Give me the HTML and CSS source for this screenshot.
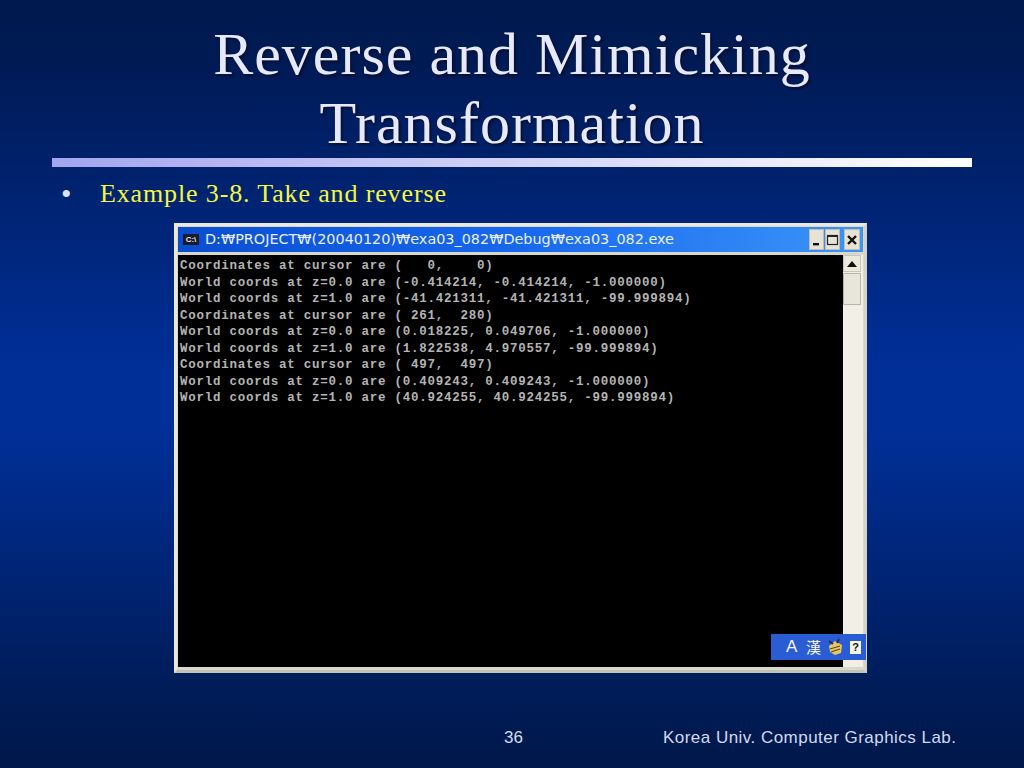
FILE: index.html
```html
<!DOCTYPE html>
<html lang="en">
<head>
<meta charset="utf-8">
<title>Reverse and Mimicking Transformation</title>
<link rel="stylesheet" href="styles.css">
</head>
<body>
<main class="slide">
  <h1 class="title">Reverse and Mimicking<br>Transformation</h1>
  <div class="rule"></div>
  <ul class="bullets"><li><span class="dot">•</span><span>Example 3-8. Take and reverse</span></li></ul>
  <section class="window">
    <header class="titlebar">
      <span class="appicon">C:\</span>
      <span class="wintitle">D:₩PROJECT₩(20040120)₩exa03_082₩Debug₩exa03_082.exe</span>
      <span class="controls">
        <span class="btn"><svg width="13" height="14" viewBox="0 0 13 14"><rect x="3" y="10" width="6" height="2.4" fill="#111"/></svg></span>
        <span class="btn"><svg width="13" height="14" viewBox="0 0 13 14"><rect x="1.5" y="2.5" width="10" height="9" fill="none" stroke="#222" stroke-width="1.2"/><rect x="1.5" y="2" width="10" height="2" fill="#222"/></svg></span>
        <span class="btn btn-close"><svg width="14" height="14" viewBox="0 0 14 14"><path d="M3 3l8 8M11 3l-8 8" stroke="#111" stroke-width="2.4"/></svg></span>
      </span>
    </header>
    <div class="client">
      <pre class="console">Coordinates at cursor are (   0,    0)
World coords at z=0.0 are (-0.414214, -0.414214, -1.000000)
World coords at z=1.0 are (-41.421311, -41.421311, -99.999894)
Coordinates at cursor are ( 261,  280)
World coords at z=0.0 are (0.018225, 0.049706, -1.000000)
World coords at z=1.0 are (1.822538, 4.970557, -99.999894)
Coordinates at cursor are ( 497,  497)
World coords at z=0.0 are (0.409243, 0.409243, -1.000000)
World coords at z=1.0 are (40.924255, 40.924255, -99.999894)</pre>
      <div class="scrollbar">
        <span class="arrow"><svg width="10" height="6" viewBox="0 0 10 6"><path d="M5 0l5 6H0z" fill="#111"/></svg></span>
        <span class="thumb"></span>
      </div>
    </div>
    <div class="ime">
      <span class="ime-a">A</span><span class="ime-han">漢</span>
      <svg class="ime-pad" width="18" height="18" viewBox="0 0 18 18"><path d="M3 8l6-5 7 4-1 8-6 2-5-3z" fill="#e8c860"/><path d="M4 11l10-3M5 14l9-3" stroke="#5a4a20" stroke-width="1.3"/><path d="M3 3l4 3M13 1l-2 4" stroke="#302860" stroke-width="2"/></svg>
      <span class="ime-help">?</span>
    </div>
  </section>
  <footer class="footer"><span class="page">36</span><span class="lab">Korea Univ. Computer Graphics Lab.</span></footer>
</main>
</body>
</html>
```
FILE: styles.css
```css
html, body { margin: 0; padding: 0; }
body { width: 1024px; height: 768px; overflow: hidden; }
.slide {
  width: 1024px; height: 768px; box-sizing: border-box;
  display: flex; flex-direction: column;
  background: linear-gradient(180deg, #001a4e 0%, #001a54 8%, #002f98 48%, #002f98 56%, #001c58 90%, #00184a 100%);
  font-family: "Liberation Serif", serif;
}
.title {
  margin: 20px 0 0; height: 138px;
  font-size: 60px; line-height: 69px; font-weight: 400;
  letter-spacing: 1px;
  color: #e6e9ff; text-align: center;
  text-shadow: 2px 2px 2px #0a1030;
}
.rule {
  margin: 0 52px; height: 9px;
  background: linear-gradient(90deg, #a4a4f0 0%, #ffffff 100%);
}
.bullets { list-style: none; margin: 12px 0 0; padding: 0 0 0 61px; height: 44px; }
.bullets li { display: flex; font-size: 26px; line-height: 30px; letter-spacing: 0.86px; color: #f6f640; }
.dot { width: 39px; color: #dde0ff; font-size: 30px; }
.window {
  position: relative;
  align-self: flex-start; margin-left: 174px;
  width: 693px; height: 450px; box-sizing: border-box;
  background: #d8d8cc; border: 3px solid #ece9dc;
  border-right-color: #d6d3c4; border-bottom-color: #c4c2b4;
  padding: 1px 1px 3px;
  display: flex; flex-direction: column;
}
.titlebar {
  height: 25px; flex: none; display: flex; align-items: center;
  background: linear-gradient(90deg, #0a4ed0 0%, #1868ee 50%, #3c94f8 100%);
  padding: 0 3px 0 5px;
}
.appicon {
  width: 16px; height: 11px; margin-right: 6px;
  background: #1a1a2a; color: #e8e8e8;
  font: 700 8px/11px "Liberation Sans", sans-serif; text-align: center;
  overflow: hidden;
}
.wintitle {
  flex: 1; color: #e8f0ff; white-space: nowrap;
  font: 14.4px/25px "DejaVu Sans", "Noto Sans CJK KR", sans-serif;
}
.controls { display: flex; gap: 1px; }
.btn {
  width: 13px; height: 19px; background: #e6e3d6;
  border: 1px solid #c0bdb0; box-sizing: content-box;
  display: flex; align-items: center; justify-content: center;
}
.btn-close { width: 14px; margin-left: 3px; }
.btn svg { display: block; }
.client { flex: 1; display: flex; background: #000; min-height: 0; margin-top: 3px; }
.console {
  flex: 1; margin: 0; padding: 3px 0 0 2px;
  font: 700 12.5px/16.5px "Liberation Mono", monospace;
  letter-spacing: 0.75px;
  color: #b4b4b4; white-space: pre; overflow: hidden;
}
.scrollbar {
  width: 18px; flex: none; background: #f2f0e6;
  display: flex; flex-direction: column; gap: 1px; padding: 0 2px 0 0; box-sizing: content-box;
}
.arrow {
  height: 17px; background: #ebe9dc; border: 1px solid #c8c6b8; box-sizing: border-box;
  display: flex; align-items: center; justify-content: center;
}
.thumb { height: 32px; background: #e8e6da; border: 1px solid #b8b6a8; box-sizing: border-box; }
.ime {
  position: absolute; left: 594px; bottom: 10px;
  width: 95px; height: 26px; box-sizing: border-box;
  background: #2a5cd4; padding-left: 15px;
  display: flex; align-items: center;
  color: #f2f6ff;
}
.ime-a { font: 17px/26px "Liberation Sans", sans-serif; width: 20px; }
.ime-han { font: 15px/26px "Noto Sans CJK SC", sans-serif; width: 20px; }
.ime-pad { margin-right: 6px; }
.ime-help {
  width: 11px; height: 13px; background: #f4f4ec; color: #111;
  font: 700 11px/13px "Liberation Sans", sans-serif; text-align: center;
}
.footer {
  flex: none; margin-top: 55px; height: 20px;
  font: 17px/20px "Liberation Sans", sans-serif; color: #d4daf0;
  display: flex;
}
.page { margin-left: 504px; width: 159px; }
.lab { letter-spacing: 0.47px; white-space: nowrap; }
```
